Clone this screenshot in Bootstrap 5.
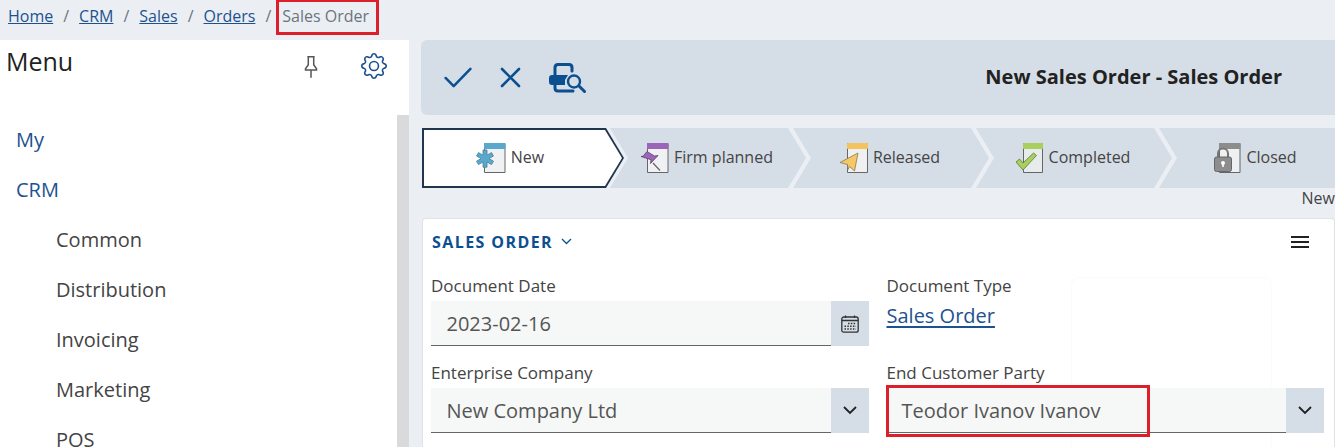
<!DOCTYPE html>
<html lang="en">
<head>
<meta charset="utf-8">
<title>New Sales Order</title>
<link rel="stylesheet" href="https://cdn.jsdelivr.net/npm/bootstrap@5.3.0/dist/css/bootstrap.min.css">
<style>
html,body{height:447px;overflow:hidden}
body{background:#ebeff4;font-family:"Open Sans",sans-serif;font-size:16px;color:#444}
a{color:#1d5290}
.crumbs{height:40px;padding:5px 8px 0}
.crumbs .breadcrumb{margin:0;--bs-breadcrumb-item-padding-x:10px;--bs-breadcrumb-divider-color:#6c757d;line-height:22px}
.crumbs .active{color:#6c757d}
.flag{position:relative}
.flag::after{content:"";position:absolute;border:3px solid #dc1f2b;pointer-events:none}
.crumbs .flag{margin-left:1px}
.crumbs .flag::after{left:-6px;right:-10px;top:-6px;bottom:-8px}
.shell{height:407px}
.side{width:409px;flex:none;background:#fff}
.side-head{height:75px;padding:3px 22px 0 6px}
.side-head h2{font-size:25px;font-weight:400;line-height:36px;margin:0;color:#222}
.pin{margin:12px 43px 0 0}
.gear{margin-top:10px}
.side-body{height:332px;overflow:hidden}
.menu-list{padding:0 0 0 16px;margin:0;list-style:none;font-size:20px;line-height:50px}
.menu-list a{color:#1d5290;text-decoration:none}
.menu-list .sub{padding-left:40px;color:#444}
.rail{width:12px;flex:none;background:#d9dadb}
.main{margin-left:12px;min-width:0;overflow:hidden}
.tools{height:75px;background:#d5dde6;border-radius:6px 0 0 6px;padding:0 53px 0 23px;gap:28px}
.tools h1{font-size:20px;font-weight:700;color:#222;margin:0 0 2px auto}
.steps{margin:13px 0 0 1px;height:60px;width:1000px}
.step{height:60px;flex:none;width:196px;margin-left:-13px;background:#d5dde6;gap:4px;padding-bottom:1px;
clip-path:polygon(0 0,178px 0,196px 30px,178px 60px,0 60px,18px 30px);color:#444}
.step-first{width:202px;margin-left:0;padding-right:24px;background:#20364f;position:relative;
clip-path:polygon(0 0,184px 0,202px 30px,184px 60px,0 60px)}
.step-first::before{content:"";position:absolute;inset:2px;background:#fff;clip-path:polygon(0 0,181px 0,198px 28px,181px 56px,0 56px)}
.step-first>*{position:relative}
.step-second{margin-left:-14px}
.step-name{margin:0 3px 2px 1px;line-height:22px}
.status{height:30px;line-height:21px;text-align:right}
.sheet{height:300px;margin-left:1px;border:1px solid #dfe3e8;border-radius:4px 4px 0 0;background:#fff;position:relative;padding:10px 10px 0 8px;border-bottom:0}
.sheet-title{height:25px;color:#0b4f91;font-weight:700;letter-spacing:1.42px;margin-bottom:20px;line-height:24px;padding-left:1px}
.burger{margin-right:15px}
.ghost{position:absolute;left:648px;top:58px;width:201px;height:240px;border:1px solid #fbfbfb;border-radius:8px}
.fields{--bs-gutter-x:18px;position:relative}
.lbl{height:27px;font-size:17px;line-height:24px;color:#444;margin:0;display:block}
.field{margin-bottom:15px}
.field .input-group{height:45px;flex-wrap:nowrap}
.val{background:#f6f8f8;border:0;border-bottom:1px solid #666;border-radius:0;height:45px;padding:0 0 0 15.5px;font-size:20px;line-height:45px;color:#555;white-space:nowrap}
.add{width:38px;flex:none;background:#d5dde6;border:0;border-radius:0;padding:0;height:45px;display:flex;align-items:center;justify-content:center}
.doc-link{font-size:20px;line-height:30px;display:block;text-underline-offset:3px}
.val .flag{display:inline-block;line-height:45px;margin-left:-.5px}
.val .flag::after{left:-16px;top:-3px;bottom:-4px;right:-49px}
</style>
</head>
<body>
<nav class="crumbs" aria-label="breadcrumb">
<ol class="breadcrumb">
<li class="breadcrumb-item"><a href="#">Home</a></li>
<li class="breadcrumb-item"><a href="#">CRM</a></li>
<li class="breadcrumb-item"><a href="#">Sales</a></li>
<li class="breadcrumb-item"><a href="#">Orders</a></li>
<li class="breadcrumb-item active" aria-current="page"><span class="flag">Sales Order</span></li>
</ol>
</nav>
<div class="shell d-flex">
<aside class="side">
<div class="side-head d-flex align-items-start">
<h2 class="flex-grow-1">Menu</h2>
<svg class="pin" width="14" height="24" viewBox="0 0 15 25" fill="none" stroke="#555" stroke-width="1.6"><path d="M3.6 1.5h7.8M4.6 1.5v8.6L1.6 14.4v1.4h11.8v-1.4l-3-4.3V1.5M7.5 15.8V24"/></svg>
<svg class="gear" width="26" height="26" viewBox="0 0 16 16" fill="#1d5290"><path d="M8 4.754a3.246 3.246 0 1 0 0 6.492 3.246 3.246 0 0 0 0-6.492zM5.754 8a2.246 2.246 0 1 1 4.492 0 2.246 2.246 0 0 1-4.492 0z"/><path d="M9.796 1.343c-.527-1.79-3.065-1.79-3.592 0l-.094.319a.873.873 0 0 1-1.255.52l-.292-.16c-1.64-.892-3.433.902-2.54 2.541l.159.292a.873.873 0 0 1-.52 1.255l-.319.094c-1.79.527-1.79 3.065 0 3.592l.319.094a.873.873 0 0 1 .52 1.255l-.16.292c-.892 1.64.901 3.434 2.541 2.54l.292-.159a.873.873 0 0 1 1.255.52l.094.319c.527 1.79 3.065 1.79 3.592 0l.094-.319a.873.873 0 0 1 1.255-.52l.292.16c1.64.893 3.434-.902 2.54-2.541l-.159-.292a.873.873 0 0 1 .52-1.255l.319-.094c1.79-.527 1.79-3.065 0-3.592l-.319-.094a.873.873 0 0 1-.52-1.255l.16-.292c.893-1.64-.902-3.433-2.541-2.54l-.292.159a.873.873 0 0 1-1.255-.52l-.094-.319zm-2.633.283c.246-.835 1.428-.835 1.674 0l.094.319a1.873 1.873 0 0 0 2.693 1.115l.291-.16c.764-.415 1.6.42 1.184 1.185l-.159.292a1.873 1.873 0 0 0 1.116 2.692l.318.094c.835.246.835 1.428 0 1.674l-.319.094a1.873 1.873 0 0 0-1.115 2.693l.16.291c.415.764-.42 1.6-1.185 1.184l-.291-.159a1.873 1.873 0 0 0-2.693 1.116l-.094.318c-.246.835-1.428.835-1.674 0l-.094-.319a1.873 1.873 0 0 0-2.692-1.115l-.292.16c-.764.415-1.6-.42-1.184-1.185l.159-.291A1.873 1.873 0 0 0 1.945 8.93l-.319-.094c-.835-.246-.835-1.428 0-1.674l.319-.094A1.873 1.873 0 0 0 3.06 4.377l-.16-.292c-.415-.764.42-1.6 1.185-1.184l.292.159a1.873 1.873 0 0 0 2.692-1.115l.094-.319z"/></svg>
</div>
<div class="side-body d-flex">
<ul class="menu-list flex-grow-1">
<li><a href="#">My</a></li>
<li><a href="#">CRM</a></li>
<li class="sub">Common</li>
<li class="sub">Distribution</li>
<li class="sub">Invoicing</li>
<li class="sub">Marketing</li>
<li class="sub">POS</li>
</ul>
<div class="rail"></div>
</div>
</aside>
<main class="main flex-grow-1">
<div class="tools d-flex align-items-center">
<svg width="28" height="21" viewBox="0 0 29 22" fill="none" stroke="#0b4f91" stroke-width="2.6" stroke-linecap="round" stroke-linejoin="round"><path d="M1.5 11.5 10 20 27.5 2"/></svg>
<svg width="21" height="21" viewBox="0 0 21 21" fill="none" stroke="#0b4f91" stroke-width="2.6" stroke-linecap="round"><path d="M2 2l17 17M19 2 2 19"/></svg>
<svg width="37" height="30" viewBox="0 0 37 30" fill="none" stroke="#0b4f91" stroke-width="3" stroke-linecap="round" stroke-linejoin="round"><path d="M6 12V4.500C6 2.500 7.500 1.500 9 1.500h11c2 0 3 1.200 3 3V8"/><path d="M6 21v4c0 1.800 1.300 3 3 3h15"/><path fill="#0b4f91" stroke="none" d="M3 12h16l-3 5v5H3a3 3 0 0 1-3-3v-4a3 3 0 0 1 3-3z"/><circle cx="25" cy="18.500" r="6" stroke-width="2.400"/><path d="m30 23 5.500 5.500"/></svg>
<h1>New Sales Order - Sales Order</h1>
</div>
<div class="steps d-flex">
<div class="step step-first d-flex align-items-center justify-content-center">
<svg width="31" height="32" viewBox="0 0 31 32"><path d="M9.500 1.500h20.500v29H9.500z" fill="#f0f1f2" stroke="#666"/><path d="M9.500 1.500h20.500v5H9.500z" fill="#5aa9cc" stroke="#5aa9cc"/><path d="M8 8v5.200l-4.500-2.600-2 3.400 4.500 2.600-4.500 2.600 2 3.400L8 20v5.200h4V20l4.500 2.600 2-3.400-4.500-2.600 4.500-2.600-2-3.400L12 13.200V8z" fill="#5aa9cc" stroke="#4a7f9c" stroke-width=".8"/></svg>
<span class="step-name">New</span>
</div>
<div class="step step-second d-flex align-items-center justify-content-center">
<svg width="29" height="32" viewBox="0 0 29 32"><path d="M7.500 1.500h20.500v29H7.500z" fill="#f0f1f2" stroke="#666"/><path d="M7.500 1.500h20.500v5H7.500z" fill="#9b66b8" stroke="#9b66b8"/><path d="m13 21 7 7.500" stroke="#666" stroke-width="1.200"/><path d="m7 9.500 7.500 4.500 3.500-.5-7.500 8 .5-3.800L1 14.500l2-.2z" fill="#9b66b8" stroke="#5d3f70" stroke-width=".8"/></svg>
<span class="step-name">Firm planned</span>
</div>
<div class="step d-flex align-items-center justify-content-center">
<svg width="29" height="32" viewBox="0 0 29 32"><path d="M8.500 1.500h20v29h-20z" fill="#eef0f1" stroke="#666"/><path d="M8.500 1.500h20v5h-20z" fill="#f2c35f" stroke="#f2c35f"/><path d="M1 20.500 19 11l-3.500 18-5-4.500-1.500 3-.5-5z" fill="#f4c866" stroke="#8a7a4a" stroke-width=".8"/></svg>
<span class="step-name">Released</span>
</div>
<div class="step d-flex align-items-center justify-content-center">
<svg width="29" height="32" viewBox="0 0 29 32"><path d="M8.500 1.500h19v29h-19z" fill="#e7ebec" stroke="#666"/><path d="M8.500 1.500h19v5h-19z" fill="#a9cf5e" stroke="#a9cf5e"/><path d="m1 20 3.500-3 3.500 4L18.500 11l3 2.500L8 28z" fill="#a9cf5e" stroke="#5f7a35" stroke-width=".8"/></svg>
<span class="step-name">Completed</span>
</div>
<div class="step d-flex align-items-center justify-content-center">
<svg width="27" height="32" viewBox="0 0 27 32"><path d="M5.500 1.500h20.500v29H5.500z" fill="#eef0f1" stroke="#666"/><path d="M5.500 1.500h20.500v5H5.500z" fill="#8d8d8d" stroke="#8d8d8d"/><path d="M4 15v-3.500a5 5 0 0 1 10 0V15" fill="none" stroke="#777" stroke-width="2"/><rect x=".5" y="15" width="17" height="14.500" rx="2" fill="#8d8d8d" stroke="#666"/><circle cx="9" cy="21" r="2" fill="#fff"/><path d="M8.200 21h1.600v4H8.200z" fill="#fff"/></svg>
<span class="step-name">Closed</span>
</div>
</div>
<div class="status">New</div>
<section class="card sheet">
<div class="ghost"></div>
<div class="d-flex align-items-center sheet-title">
<span>SALES ORDER</span>
<svg class="ms-2" width="11" height="7" viewBox="0 0 11 7" fill="none" stroke="#0b4f91" stroke-width="1.300"><path d="m1 1 4.500 4.500L10 1"/></svg>
<svg class="burger ms-auto" width="18" height="12" viewBox="0 0 18 12" fill="#222"><path d="M0 0h18v2H0zM0 5h18v2H0zM0 10h18v2H0z"/></svg>
</div>
<div class="row fields">
<div class="col-6 field">
<label class="lbl">Document Date</label>
<div class="input-group">
<div class="val flex-grow-1">2023-02-16</div>
<div class="add"><svg width="18" height="18" viewBox="0 0 18 18" fill="none" stroke="#333" stroke-width="1.300"><rect x=".8" y="2" width="16.400" height="15.200" rx="2"/><path d="M.8 5.500h16.400M4.500.5v2.500M13.500.5v2.500"/><path stroke-dasharray="1.500 1.300" stroke-width="1.500" d="M7 8.500h8M3.500 11.300h11.500M3.500 14h11.500"/></svg></div>
</div>
</div>
<div class="col-6 field">
<label class="lbl">Document Type</label>
<a class="doc-link" href="#">Sales Order</a>
</div>
<div class="col-6 field">
<label class="lbl">Enterprise Company</label>
<div class="input-group">
<div class="val flex-grow-1">New Company Ltd</div>
<div class="add"><svg width="14" height="9" viewBox="0 0 14 9" fill="none" stroke="#222" stroke-width="1.800"><path d="m1 1 6 6 6-6"/></svg></div>
</div>
</div>
<div class="col-6 field">
<label class="lbl">End Customer Party</label>
<div class="input-group">
<div class="val flex-grow-1"><span class="flag">Teodor Ivanov Ivanov</span></div>
<div class="add"><svg width="14" height="9" viewBox="0 0 14 9" fill="none" stroke="#222" stroke-width="1.800"><path d="m1 1 6 6 6-6"/></svg></div>
</div>
</div>
</div>
</section>
</main>
</div>
<script src="https://cdn.jsdelivr.net/npm/bootstrap@5.3.0/dist/js/bootstrap.bundle.min.js"></script>
</body>
</html>
